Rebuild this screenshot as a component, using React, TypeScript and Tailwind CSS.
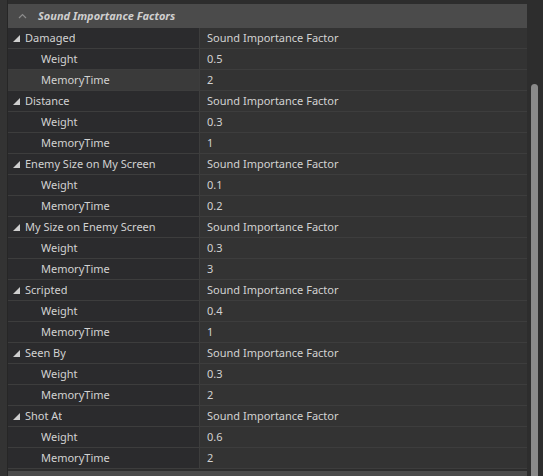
type Factor = { name: string; weight: string; memory: string };

const factors: Factor[] = [
  { name: 'Damaged', weight: '0.5', memory: '2' },
  { name: 'Distance', weight: '0.3', memory: '1' },
  { name: 'Enemy Size on My Screen', weight: '0.1', memory: '0.2' },
  { name: 'My Size on Enemy Screen', weight: '0.3', memory: '3' },
  { name: 'Scripted', weight: '0.4', memory: '1' },
  { name: 'Seen By', weight: '0.3', memory: '2' },
  { name: 'Shot At', weight: '0.6', memory: '2' },
];

const Expander = () => (
  <svg width="7" height="7" viewBox="0 0 7 7" className="mr-[5px] shrink-0">
    <polygon points="7,0 7,7 0,7" fill="#cfcfcf" />
  </svg>
);

const Row = ({
  label,
  value,
  child,
  selected,
}: {
  label: string;
  value: string;
  child?: boolean;
  selected?: boolean;
}) => (
  <div className="flex h-[21px] border-b border-[#3d3d3d]">
    <div
      className={`w-[192px] shrink-0 flex items-center border-r border-[#3d3d3d] ${
        selected ? 'bg-[#3a3a3a]' : 'bg-[#2b2b2d]'
      } ${child ? 'pl-[33px]' : 'pl-[5px]'}`}
    >
      {!child && <Expander />}
      <span className="truncate">{label}</span>
    </div>
    <div className="flex-1 flex items-center pl-[7px] bg-[#333333]">{value}</div>
  </div>
);

export default function App() {
  return (
    <div
      className="w-[543px] h-[476px] bg-[#2d2d2d] flex overflow-hidden text-[11px] text-[#d2d2d2]"
      style={{ fontFamily: '"Noto Sans", "Open Sans", sans-serif' }}
    >
      <div className="w-[8px] shrink-0 bg-[#333333] border-r border-[#262626]" />
      <div className="w-[519px] shrink-0 flex flex-col pt-[4px]">
        <div className="h-[24px] shrink-0 bg-[#4b4b4b] flex items-center pl-[10px]">
          <svg width="9" height="6" viewBox="0 0 9 6" className="mr-[11px]">
            <polyline points="1,5 4.5,1.5 8,5" fill="none" stroke="#8c8c8c" strokeWidth="1.2" />
          </svg>
          <span className="italic font-bold text-[#cfcfcf]">Sound Importance Factors</span>
        </div>
        <div className="flex flex-col">
          {factors.map((f, i) => (
            <div key={f.name}>
              <Row label={f.name} value="Sound Importance Factor" />
              <Row label="Weight" value={f.weight} child />
              <Row label="MemoryTime" value={f.memory} child selected={i === 0} />
            </div>
          ))}
        </div>
        <div className="mt-[2px] h-[12px] shrink-0 bg-[#4b4b4b]" />
      </div>
      <div className="flex-1 flex flex-col pl-[4px] pr-[5px]">
        <div className="h-[84px] shrink-0" />
        <div className="flex-1 rounded-t-full bg-[#8a8a8a]" />
      </div>
    </div>
  );
}
